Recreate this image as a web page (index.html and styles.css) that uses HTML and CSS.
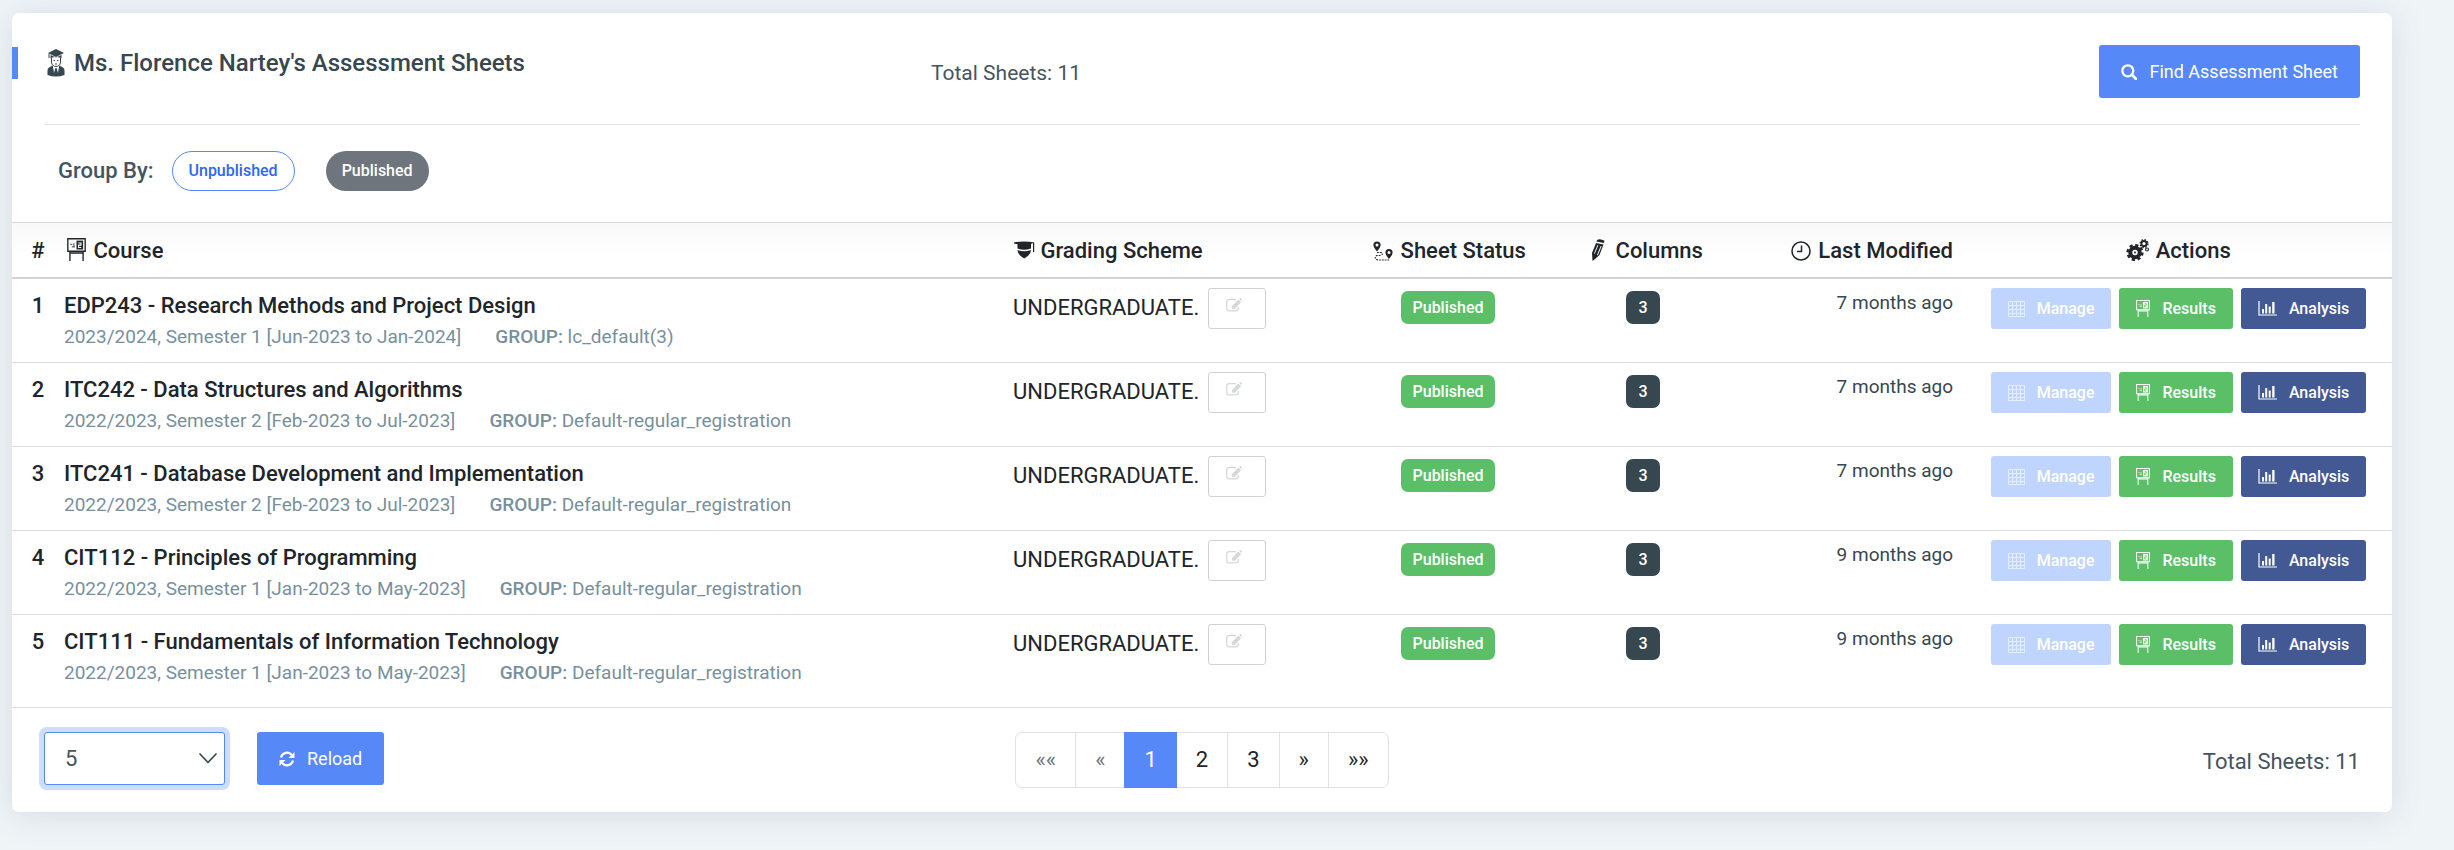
FILE: index.html
```
<!DOCTYPE html>
<html lang="en">
<head>
<meta charset="utf-8">
<title>Assessment Sheets</title>
<link rel="stylesheet" href="styles.css">
</head>
<body>
<svg class="sprite" aria-hidden="true">
  <symbol id="i-teacher" viewBox="0 0 18 28"><path fill="currentColor" d="M9 0L1 4l8 4 8-4zM3.500 6v3.500C6 7.500 12 7.500 14.500 9.500V6L9 8.500z"/><path fill="none" stroke="currentColor" d="M2 4.500V9M4.500 9v4c0 3 2 4.500 4.500 4.500s4.500-1.500 4.500-4.500V9M6.500 11.500h1.500M10 11.500h1.500M8 15h2"/><path fill="currentColor" d="M5.500 16.500L9 25l3.500-8.500L16 18.500q1.500 1 1.500 3V26Q9 29 .5 26v-4.500q0-2 1.500-3zM8 19h2l.8 5L9 26l-1.800-2z"/><path fill="#fff" d="M6 17l2.400 2-1.400 5zM12 17L9.600 19l1.400 5z"/></symbol>
  <symbol id="i-search" viewBox="0 0 16 16"><circle cx="6.800" cy="6.800" r="5.500" fill="none" stroke="currentColor" stroke-width="2.300"/><path d="M10.800 10.800l4 4" stroke="currentColor" stroke-width="2.800" stroke-linecap="round"/></symbol>
  <symbol id="i-board" viewBox="0 0 18 22"><path fill="none" stroke="currentColor" stroke-width="1.300" d="M.7.700h16.600v12H.7zM2.700 13v9M15.300 13v9M2.700 14.300h12.600"/><path fill="currentColor" d="M9 2.500h6.300v8.500H9z"/><path fill="none" stroke="currentColor" stroke-width=".8" d="M3 6h2M4.500 8.500h3M6.500 5v3.500"/><path fill="none" stroke="var(--ink, #fff)" d="M10.700 4.800h2.600v2h-2.300v2.200h2.500"/></symbol>
  <symbol id="i-cap" viewBox="0 0 22 22"><path fill="currentColor" d="M.8 3.500Q11 1.500 21.200 3.500L18 5v4.500Q11 12 4.500 9.500V5.200L1 4.500zM4.500 11Q11 13.500 18 11q0 5-6.800 8.500Q4.500 16 4.500 11z"/><path fill="none" stroke="currentColor" stroke-width="1.200" d="M20.600 3.500V13"/></symbol>
  <symbol id="i-route" viewBox="0 0 20 20"><path fill="currentColor" fill-rule="evenodd" d="M4 .5a3.600 3.600 0 0 1 3.600 3.600Q7.600 6.500 4 10.500 .4 6.500.4 4.100A3.600 3.600 0 0 1 4 .5zm0 2a1.500 1.500 0 1 0 0 3 1.500 1.500 0 0 0 0-3zM16 8a3.600 3.600 0 0 1 3.600 3.600q0 2.400-3.600 6.400-3.600-4-3.600-6.400A3.600 3.600 0 0 1 16 8zm0 2a1.500 1.500 0 1 0 0 3 1.500 1.500 0 0 0 0-3z"/><path fill="none" stroke="currentColor" stroke-width="1.100" stroke-dasharray="1.800 1" d="M4 11.500h4q3 1.500-.5 3H4q-3 1.500-1 3.500 1 1 3 1h10"/></symbol>
  <symbol id="i-pencil" viewBox="0 0 14 22"><path fill="currentColor" fill-rule="evenodd" d="M6 1q3-2 7.500.8L12.800 4 5.500 2.500zM5 4l7.500 1.500L8.500 16 3.500 20.500 1.500 22 1 14zm1.500 2L3 14.500l.8.300L7.300 6.300zM9.700 7L6 16l.9.200L10.600 7.200z"/></symbol>
  <symbol id="i-clock" viewBox="0 0 20 20"><circle cx="10" cy="10" r="9" fill="none" stroke="currentColor" stroke-width="1.500"/><path d="M10.500 4.500v6H6" fill="none" stroke="currentColor" stroke-width="1.500"/></symbol>
  <symbol id="i-gears" viewBox="0 0 24 22"><circle cx="9" cy="13.500" r="4.700" fill="none" stroke="currentColor" stroke-width="4"/><circle cx="9" cy="13.500" r="7.400" fill="none" stroke="currentColor" stroke-width="2.400" stroke-dasharray="3.200 2.610"/><circle cx="9" cy="13.500" r="1" fill="currentColor"/><circle cx="18" cy="4.600" r="2.600" fill="none" stroke="currentColor" stroke-width="1.900"/><circle cx="18" cy="4.600" r="3.900" fill="none" stroke="currentColor" stroke-width="1.300" stroke-dasharray="1.600 1.460"/><circle cx="21" cy="10.500" r="1.500" fill="none" stroke="currentColor" stroke-width="1.100"/></symbol>
  <symbol id="i-edit" viewBox="0 0 16 14"><path fill="none" stroke="currentColor" stroke-width="1.200" d="M10 1.600H3A2.300 2.300 0 0 0 .7 3.900v6.600A2.300 2.300 0 0 0 3 12.800h7a2.300 2.300 0 0 0 2.300-2.300V9"/><path fill="currentColor" d="M12.500 1.500L6 8v2.700h2.700l6.500-6.500zM13.300.8l.8-.6q.5-.3 1 .2l.8.800q.4.500 0 1l-.5.700z"/></symbol>
  <symbol id="i-grid" viewBox="0 0 17 16"><path fill="none" stroke="currentColor" d="M.5.500h16v15H.5zM.5 4.500h16M.5 8.500h16M.5 12.500h16M4.500.5v15M8.500.5v15M12.500.5v15"/></symbol>
  <symbol id="i-chart" viewBox="0 0 19 15"><path fill="none" stroke="currentColor" stroke-width="1.200" d="M1 0v14h18"/><path fill="currentColor" d="M4 8h2v4.500H4zM7.200 3h2v9.500h-2zM10.700 5.500h2v7h-2zM14.200 1h2.300v11.500h-2.300z"/></symbol>
  <symbol id="i-refresh" viewBox="0 0 16 16"><path fill="none" stroke="currentColor" stroke-width="2.200" d="M2 6.500A6.200 6.200 0 0 1 12.800 4M14 9.500A6.200 6.200 0 0 1 3.200 12"/><path fill="currentColor" d="M15.500 1v6h-6zM.5 15V9h6z"/></symbol>
  <symbol id="i-down" viewBox="0 0 18 11"><path fill="none" stroke="currentColor" stroke-width="1.700" stroke-linecap="round" stroke-linejoin="round" d="M1 1l8 8.500L17 1"/></symbol>
</svg>
<main class="card">
  <header class="head">
    <h1 class="title"><svg class="ic-teacher"><use href="#i-teacher"/></svg>Ms. Florence Nartey's Assessment Sheets</h1>
    <p class="head-total">Total Sheets: 11</p>
    <button class="btn btn-primary" type="button"><svg class="ic-16"><use href="#i-search"/></svg>Find Assessment Sheet</button>
  </header>
  <section class="group">
    <h2 class="group-label">Group By:</h2>
    <button class="pill pill-outline" type="button">Unpublished</button>
    <button class="pill pill-solid" type="button">Published</button>
  </section>
  <table class="sheets">
    <thead>
      <tr>
        <th class="c-num">#</th>
        <th class="c-course"><svg class="ic-board"><use href="#i-board"/></svg> Course</th>
        <th class="c-grade"><svg class="ic-cap"><use href="#i-cap"/></svg> Grading Scheme</th>
        <th class="c-status"><svg class="ic-20"><use href="#i-route"/></svg> Sheet Status</th>
        <th class="c-cols"><svg class="ic-pencil"><use href="#i-pencil"/></svg> Columns</th>
        <th class="c-mod"><svg class="ic-20"><use href="#i-clock"/></svg> Last Modified</th>
        <th class="c-act"><svg class="ic-gears"><use href="#i-gears"/></svg> Actions</th>
      </tr>
    </thead>
    <tbody id="rows"></tbody>
  </table>
  <footer class="foot">
    <div class="foot-left">
      <label class="select-box"><select class="select" aria-label="Sheets per page"><option>5</option><option>10</option><option>25</option></select><svg class="ic-down"><use href="#i-down"/></svg></label>
      <button class="btn btn-primary" type="button"><svg class="ic-16"><use href="#i-refresh"/></svg>Reload</button>
    </div>
    <nav class="pages" aria-label="Pages">
      <a class="page off" href="#">««</a><a class="page off" href="#">«</a><a class="page on" href="#">1</a><a class="page" href="#">2</a><a class="page" href="#">3</a><a class="page" href="#">»</a><a class="page" href="#">»»</a>
    </nav>
    <p class="foot-total">Total Sheets: 11</p>
  </footer>
</main>
<script src="rows.js"></script>
</body>
</html>
```
FILE: styles.css
```
* { box-sizing: border-box; }
body { margin: 0; padding: 13px 62px 38px 12px; background: #eff4f7; font-family: Roboto, "Liberation Sans", sans-serif; font-size: 20px; line-height: 30px; color: #455560; }
svg { flex: none; }
.sprite { position: absolute; width: 0; height: 0; }
h1, h2, p { margin: 0; }
a { text-decoration: none; color: inherit; }
button { font-family: inherit; cursor: pointer; border: 0; }
.card { background: #fff; border-radius: 7px; box-shadow: 0 3px 34px rgba(69, 85, 96, .15); }
.head { display: grid; grid-template-columns: 887px 1fr auto; margin: 0 32px 0 0; padding: 32px 0 27px; align-items: start; position: relative; }
.head::after { content: ""; position: absolute; left: 32px; right: 0; bottom: 0; border-bottom: 1px solid #e2e4e6; }
.title { display: flex; align-items: center; gap: 9px; margin-top: 2px; padding-left: 29px; border-left: 6px solid #5788f8; font-size: 24px; line-height: 32px; font-weight: 500; color: #37474f; }
.head-total { margin: 13px 0 0 32px; font-size: 21px; }
.btn { display: inline-flex; align-items: center; gap: 12px; height: 53px; padding: 0 22px; border-radius: 3px; font-size: 18px; font-weight: 400; color: #fff; }
.btn-primary { background: #5788f8; }
.group { display: flex; align-items: center; height: 98px; padding: 0 46px 6px; border-bottom: 1px solid #d8dadd; }
.group-label { margin-right: 18px; font-size: 22px; font-weight: 500; }
.pill { height: 40px; padding: 0 16px; border-radius: 20px; font-size: 16px; font-weight: 500; }
.pill-outline { margin-right: 31px; border: 1px solid #5788f8; background: #fff; color: #2f66f2; }
.pill-solid { background: #6e757d; color: #fff; }

.sheets { width: 100%; table-layout: fixed; border-collapse: collapse; color: #212529; }
.sheets th { height: 55px; padding: 2px 12px 0; font-size: 22px; font-weight: 500; text-align: left; border-bottom: 2px solid #d0d2d4; white-space: nowrap; }
.sheets thead { background: linear-gradient(#f8f8f8, #fff 60%); }
.sheets th svg { margin: 0 2px 0 3px; vertical-align: -3px; }
.sheets td { height: 84px; padding: 9px 12px; vertical-align: top; border-bottom: 1px solid #dcdee2; white-space: nowrap; }
.sheets tbody tr:last-child td { height: 93px; }
.sheets .c-num { width: 40px; padding-left: 12px; padding-right: 0; text-align: center; }
.sheets .c-course { width: auto; }
.sheets .c-grade { width: 343px; }
.sheets .c-status { width: 208px; text-align: center; }
.sheets .c-cols { width: 182px; text-align: center; }
.sheets .c-mod { width: 231px; text-align: right; }
.sheets .c-act { width: 427px; text-align: center; }
.sheets td.c-num { padding-top: 12px; font-size: 22px; font-weight: 500; }
.name { margin-top: 3px; font-size: 22px; font-weight: 500; }
.meta { display: flex; gap: 34px; font-size: 19px; line-height: 32px; color: #78909c; }
.meta b { font-weight: 500; }
.grade, .acts { display: flex; }
.grade { gap: 9px; font-size: 22px; line-height: 40px; }
.edit { width: 58px; height: 41px; padding: 0 7px 4px 0; border: 1px solid #d0d2d4; border-radius: 3px; background: #fff; color: #d5d8da; }
.badge { display: inline-block; margin-top: 3px; padding: 0 12px; height: 33px; border-radius: 7px; background: #5abf66; color: #fff; font-size: 16px; font-weight: 500; line-height: 33px; }
.badge-dark { background: #37474f; }
.sheets td.c-mod { font-size: 19px; color: #37474f; }
.acts { justify-content: center; gap: 8px; }
.act { display: flex; align-items: center; justify-content: center; gap: 12px; height: 41px; padding: 0 17px; border-radius: 3px; color: #fff; font-size: 16px; font-weight: 500; }
.act-manage { background: #c0d5fd; }
.act-results { --ink: #5abf66; background: #5abf66; }
.act-analysis { background: #435993; }

.foot { display: grid; grid-template-columns: 1fr auto 1fr; align-items: start; padding: 24px 32px; }
.foot-left { display: flex; gap: 32px; }
.select-box { position: relative; width: 181px; }
.select { appearance: none; width: 100%; height: 53px; padding: 0 20px; border: 1px solid #5788f8; border-radius: 3px; outline: 0; box-shadow: 0 0 0 5px #cdddfd; background: #fff; font-family: inherit; font-size: 22px; color: #455560; }
.ic-down { position: absolute; right: 8px; top: 21px; pointer-events: none; width: 18px; height: 11px; color: #37474f; }
.pages { display: flex; border: 1px solid #dfe1e5; border-radius: 7px; }
.page { padding: 0 19px; font-size: 22px; line-height: 54px; color: #212529; border-left: 1px solid #dfe1e5; }
.page:first-child { border-left: 0; }
.page.off { color: #6e757d; }
.page.on { margin: -1px 0; padding: 1px 20px; border: 0; background: #5788f8; color: #fff; }
.page.on + .page { border-left: 0; }
.foot-total { margin-top: 15px; text-align: right; font-size: 22px; }

.ic-teacher { width: 18px; height: 28px; }
.ic-16 { width: 16px; height: 16px; }
.ic-20 { width: 20px; height: 20px; }
.ic-board { width: 19px; height: 23px; }
.sheets th .ic-cap { width: 22px; height: 22px; margin: 0; }
.sheets th .ic-pencil { width: 14px; height: 22px; margin: 0 5px 0 8px; }
.sheets th .ic-gears { width: 24px; height: 22px; margin: 0; }
.ic-edit { width: 16px; height: 14px; }
.ic-grid { width: 17px; height: 16px; opacity: .6; }
.ic-board-s { width: 14px; height: 17px; }
.ic-chart { width: 19px; height: 15px; }
```
FILE: rows.js
```
const sheets = [
  ["EDP243 - Research Methods and Project Design", "2023/2024, Semester 1 [Jun-2023 to Jan-2024]", "lc_default(3)", "7 months ago"],
  ["ITC242 - Data Structures and Algorithms", "2022/2023, Semester 2 [Feb-2023 to Jul-2023]", "Default-regular_registration", "7 months ago"],
  ["ITC241 - Database Development and Implementation", "2022/2023, Semester 2 [Feb-2023 to Jul-2023]", "Default-regular_registration", "7 months ago"],
  ["CIT112 - Principles of Programming", "2022/2023, Semester 1 [Jan-2023 to May-2023]", "Default-regular_registration", "9 months ago"],
  ["CIT111 - Fundamentals of Information Technology", "2022/2023, Semester 1 [Jan-2023 to May-2023]", "Default-regular_registration", "9 months ago"]
];
document.getElementById("rows").innerHTML = sheets.map(([name, term, group, when], i) => `
<tr>
  <td class="c-num">${i + 1}</td>
  <td class="c-course"><div class="name">${name}</div><div class="meta"><span>${term}</span><span><b>GROUP:</b> ${group}</span></div></td>
  <td class="c-grade"><div class="grade"><span>UNDERGRADUATE.</span><button class="edit" type="button" aria-label="Edit grading scheme"><svg class="ic-edit"><use href="#i-edit"/></svg></button></div></td>
  <td class="c-status"><span class="badge">Published</span></td>
  <td class="c-cols"><span class="badge badge-dark">3</span></td>
  <td class="c-mod">${when}</td>
  <td class="c-act"><div class="acts"><button class="act act-manage" type="button"><svg class="ic-grid"><use href="#i-grid"/></svg>Manage</button><button class="act act-results" type="button"><svg class="ic-board-s"><use href="#i-board"/></svg>Results</button><button class="act act-analysis" type="button"><svg class="ic-chart"><use href="#i-chart"/></svg>Analysis</button></div></td>
</tr>`).join("");
```
